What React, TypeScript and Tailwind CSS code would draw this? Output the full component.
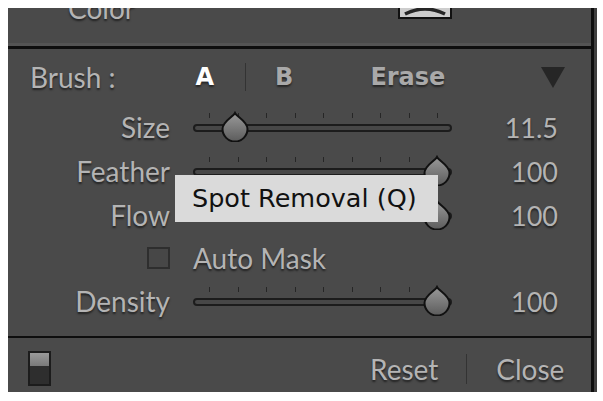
import React from "react";

const FONT = { fontFamily: "Lato, 'Open Sans', sans-serif" };

function Thumb({ left }: { left: number }) {
  return (
    <svg
      className="absolute top-[6px]"
      style={{ left: left - 15 }}
      width="30"
      height="31"
      viewBox="0 0 30 31"
    >
      <defs>
        <linearGradient id="thumbFill" x1="0" y1="0" x2="0" y2="1">
          <stop offset="0" stopColor="#9a9a9a" />
          <stop offset="1" stopColor="#5c5c5c" />
        </linearGradient>
      </defs>
      <path
        d="M15 2 C17 6 27.5 10 27.5 18 A12.5 12.5 0 0 1 2.5 18 C2.5 10 13 6 15 2 Z"
        fill="url(#thumbFill)"
        stroke="#111"
        strokeWidth="2"
      />
    </svg>
  );
}

function Slider({ thumb }: { thumb: number }) {
  return (
    <div className="relative h-full w-[259px] pt-[8px]">
      <div className="flex h-[5px] justify-between pl-[16px] pr-[14px]">
        {Array.from({ length: 9 }).map((_, i) => (
          <div key={i} className="h-[5px] w-px bg-[#262626]" />
        ))}
      </div>
      <div className="mt-[6px] h-[8px] rounded-full border-2 border-[#1c1c1c] bg-[#474747]" />
      <Thumb left={thumb} />
    </div>
  );
}

const label =
  "text-[#b4b4b4] text-[28px] leading-none [text-shadow:0_2px_2px_rgba(0,0,0,0.55)]";
const boldLabel =
  "font-bold text-[24px] leading-none [text-shadow:0_2px_2px_rgba(0,0,0,0.5)] [font-family:'DejaVu_Sans',sans-serif]";

function Row({
  name,
  value,
  thumb,
  h,
}: {
  name: string;
  value: string;
  thumb: number;
  h: string;
}) {
  return (
    <div className={`flex ${h}`}>
      <div className={`flex w-[162px] items-center justify-end ${label}`}>
        {name}
      </div>
      <div className="ml-[23px]">
        <Slider thumb={thumb} />
      </div>
      <div
        className={`flex w-[106px] items-center justify-end ${label} !text-[27px]`}
      >
        {value}
      </div>
    </div>
  );
}

export default function App() {
  return (
    <div
      className="h-[401px] w-[603px] overflow-hidden bg-white pl-[8px] pt-[8px]"
      style={FONT}
    >
      <div className="flex h-[384px] w-[589px]">
        <div className="relative flex w-[583px] flex-col bg-[#4a4a4a]">
          {/* top section, scrolled mostly out of view */}
          <div className="h-[38px] overflow-hidden border-b-[3px] border-[#545454]">
            <div className="mt-[-14px] flex items-start">
              <span className={`ml-[60px] ${label}`}>Color</span>
              <div className="ml-[263px] mt-[-5px] flex h-[30px] w-[54px] items-end justify-center border-2 border-[#111] bg-[#cdcdcd]">
                <svg width="44" height="12" viewBox="0 0 44 12" className="mb-[1px]">
                  <path
                    d="M2 10 Q22 0 42 10"
                    fill="none"
                    stroke="#262626"
                    strokeWidth="3.5"
                  />
                </svg>
              </div>
            </div>
          </div>
          <div className="h-[3px] bg-[#0e0e0e]" />

          {/* main */}
          <div className="relative h-[287px]">
            <div className="flex h-[56px] items-center">
              <span className={`ml-[22px] ${label}`}>Brush :</span>
              <span className={`ml-[80px] text-white ${boldLabel}`}>A</span>
              <div className="ml-[31px] h-[28px] w-px bg-[#333]" />
              <span className={`ml-[29px] text-[#a9a9a9] ${boldLabel}`}>B</span>
              <span className={`ml-[77px] text-[#a9a9a9] ${boldLabel}`}>Erase</span>
              <svg
                width="24"
                height="21"
                viewBox="0 0 24 21"
                className="ml-auto mr-[26px]"
              >
                <path d="M0 0 H24 L12 21 Z" fill="#262626" />
              </svg>
            </div>
            <Row name="Size" value="11.5" thumb={42} h="h-[44px]" />
            <Row name="Feather" value="100" thumb={244} h="h-[44px]" />
            <Row name="Flow" value="100" thumb={244} h="h-[44px]" />
            <div className="flex h-[42px] items-center">
              <div className="flex w-[162px] justify-end">
                <div className="h-[22px] w-[23px] border-2 border-[#2e2e2e] bg-[#474747]" />
              </div>
              <span className={`ml-[23px] ${label}`}>Auto Mask</span>
            </div>
            <Row name="Density" value="100" thumb={244} h="h-[44px]" />

            {/* tooltip */}
            <div className="absolute left-[167px] top-[126px] flex h-[47px] w-[263px] items-center bg-[#dadada] pl-[17px] text-[25.5px] leading-none text-[#111] [font-family:'DejaVu_Sans',sans-serif]">
              Spot Removal (Q)
            </div>
          </div>
          <div className="h-[2px] bg-[#0e0e0e]" />

          {/* bottom */}
          <div className="flex flex-1 items-center pt-[7px]">
            <div className="ml-[20px] flex h-[35px] w-[23px] flex-col border-2 border-[#1c1c1c]">
              <div className="h-[13px] bg-gradient-to-b from-[#9a9a9a] to-[#7a7a7a]" />
              <div className="flex-1 bg-[#2e2e2e]" />
            </div>
            <span className={`ml-[319px] ${label}`}>Reset</span>
            <div className="ml-[28px] h-[30px] w-px bg-[#333]" />
            <span className={`ml-[29px] ${label}`}>Close</span>
          </div>
        </div>
        <div className="w-[3px] bg-[#0e0e0e]" />
        <div className="w-[3px] bg-[#3e3e3e]" />
      </div>
    </div>
  );
}
